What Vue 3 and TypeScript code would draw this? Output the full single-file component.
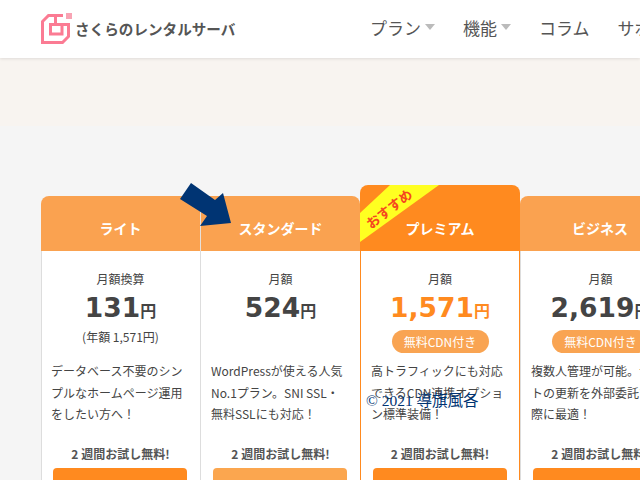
<template>
  <div class="page">
    <header class="site-header">
      <div class="logo">
        <svg class="logo-mark" viewBox="0 0 31 32" width="31" height="32" aria-hidden="true">
          <path
            d="M22 2.500H7.500L1.500 8.500V29.500H21.500L27.500 23.500V11.500H9.500V21H21V11.500M14.500 2.500V11.500"
            fill="none"
            stroke="#fb7b93"
            stroke-width="3"
          />
          <rect x="25" y="0" width="6" height="6" fill="#f8a4b4" />
        </svg>
        <span class="logo-text">さくらのレンタルサーバ</span>
      </div>
      <nav class="nav">
        <a v-for="item in navItems" :key="item.label" class="nav-item">
          {{ item.label }}<i v-if="item.caret" class="caret"></i>
        </a>
      </nav>
    </header>

    <div class="band"></div>

    <main class="plans">
      <section
        v-for="plan in plans"
        :key="plan.name"
        class="plan"
        :class="{ featured: plan.featured }"
      >
        <div class="plan-head">
          <div v-if="plan.featured" class="ribbon"><span>おすすめ</span></div>
          <h2>{{ plan.name }}</h2>
        </div>
        <div class="plan-body">
          <p class="price-label">{{ plan.label }}</p>
          <p class="price">{{ plan.price }}<small>円</small></p>
          <div class="extra">
            <p v-if="plan.yearly" class="yearly">{{ plan.yearly }}</p>
            <p v-if="plan.cdn" class="badge">無料CDN付き</p>
          </div>
          <p class="desc">{{ plan.desc }}</p>
          <p class="trial"><span class="two">2</span>週間お試し無料!</p>
          <a class="cta" :class="{ light: plan.light }"></a>
        </div>
      </section>
    </main>

    <svg class="arrow" width="60" height="50" viewBox="0 0 60 50" aria-hidden="true">
      <polygon points="11,3 35,20 43,13 51,43 20,46 27,36 0,19" fill="#003473" />
    </svg>
    <div class="watermark">© 2021 導旗風各</div>
  </div>
</template>

<script setup lang="ts">
interface Plan {
  name: string
  label: string
  price: string
  yearly?: string
  cdn?: boolean
  featured?: boolean
  light?: boolean
  desc: string
}

const navItems = [
  { label: 'プラン', caret: true },
  { label: '機能', caret: true },
  { label: 'コラム', caret: false },
  { label: 'サポート', caret: false }
]

const plans: Plan[] = [
  {
    name: 'ライト',
    label: '月額換算',
    price: '131',
    yearly: '(年額 1,571円)',
    desc: 'データベース不要のシンプルなホームページ運用をしたい方へ！'
  },
  {
    name: 'スタンダード',
    label: '月額',
    price: '524',
    light: true,
    desc: 'WordPressが使える人気No.1プラン。SNI SSL・無料SSLにも対応！'
  },
  {
    name: 'プレミアム',
    label: '月額',
    price: '1,571',
    cdn: true,
    featured: true,
    desc: '高トラフィックにも対応できるCDN連携オプション標準装備！'
  },
  {
    name: 'ビジネス',
    label: '月額',
    price: '2,619',
    cdn: true,
    desc: '複数人管理が可能。サイトの更新を外部委託する際に最適！'
  }
]
</script>

<style>
html,
body {
  margin: 0;
  overflow: hidden;
  background: #f5f5f5;
}
</style>

<style scoped>
.page {
  position: relative;
  width: 640px;
  height: 480px;
  overflow: hidden;
  background: #f5f5f5;
  color: #444;
  font-family: "Noto Sans CJK JP", "Noto Sans", sans-serif;
}

.site-header {
  position: relative;
  z-index: 1;
  display: flex;
  align-items: center;
  justify-content: space-between;
  box-sizing: border-box;
  height: 58px;
  padding: 0 0 4px 41px;
  background: #fff;
  box-shadow: 0 1px 3px rgba(0, 0, 0, 0.1);
}

.logo {
  display: flex;
  align-items: center;
  gap: 3px;
}

.logo-mark {
  margin-top: 4px;
}

.logo-text {
  margin-top: 2px;
  color: #555;
  font-size: 14.6px;
  font-weight: 700;
  white-space: nowrap;
}

.nav {
  display: flex;
  flex: none;
  gap: 28px;
  width: 270px;
  font-size: 17px;
  color: #555;
  white-space: nowrap;
}

.nav-item {
  display: flex;
  align-items: center;
}

.caret {
  width: 0;
  height: 0;
  margin-left: 4px;
  border: 5px solid transparent;
  border-top: 6px solid #bbb;
  border-bottom: 0;
}

.band {
  height: 68px;
  background: #f8f4f0;
}

.plans {
  display: flex;
  align-items: flex-end;
  width: 800px;
  padding: 59px 0 0 41px;
}

.plan {
  flex: none;
  width: 160px;
}

.plan:first-child {
  width: 159px;
}

.plan-head {
  position: relative;
  display: flex;
  align-items: flex-end;
  justify-content: center;
  box-sizing: border-box;
  height: 55px;
  padding-bottom: 13px;
  overflow: hidden;
  border-radius: 8px 8px 0 0;
  background: #faa250;
}

.plan:nth-child(2) .plan-head {
  border-left: 1px solid #e6e0da;
  border-top-left-radius: 0;
}

.featured .plan-head {
  height: 66px;
  background: #ff8a1f;
}

.plan-head h2 {
  margin: 0;
  color: #fff;
  font-size: 14px;
  font-weight: 700;
}

.ribbon {
  position: absolute;
  top: 0;
  left: 0;
  width: 80px;
  height: 58px;
  background: #ffff21;
  clip-path: polygon(0 57px, 0 28px, 30px 0, 79px 0);
}

.ribbon span {
  position: absolute;
  top: 13px;
  left: 2px;
  color: #f5471f;
  font-size: 13.500px;
  font-weight: 700;
  line-height: 21px;
  transform: rotate(-38deg);
  white-space: nowrap;
}

.plan-body {
  box-sizing: border-box;
  height: 229px;
  padding: 19px 10px 0;
  border-left: 1px solid #ddd;
  background: #fff;
  text-align: center;
}

.plan:first-child .plan-body {
  padding-left: 9px;
}

.featured .plan-body {
  border-right: 1px solid #ff8a1f;
  border-left: 1px solid #ff8a1f;
}

.plan-body p {
  margin: 0;
}

.price-label {
  font-size: 12px;
  line-height: 18px;
}

.plan-body .price {
  margin: 3px 0 3px;
  font-family: "DejaVu Sans", sans-serif;
  font-size: 26.500px;
  font-weight: 700;
  line-height: 34px;
}

.price small {
  font-family: "Noto Sans CJK JP", sans-serif;
  font-size: 16px;
}

.featured .price {
  color: #ff8a1f;
}

.extra {
  height: 23px;
}

.yearly {
  font-size: 12px;
  line-height: 14px;
}

.badge {
  width: 97px;
  margin: 0 auto !important;
  border-radius: 12px;
  background: #f9a452;
  color: #fff;
  font-size: 12px;
  line-height: 23px;
}

.plan-body .desc {
  height: 65px;
  margin-top: 7px;
  font-size: 12px;
  line-height: 21.600px;
  text-align: left;
}

.plan-body .trial {
  margin-top: 20px;
  color: #555;
  font-size: 12px;
  font-weight: 700;
  line-height: 18px;
}

.two {
  margin-right: 3px;
}

.cta {
  display: block;
  width: 134px;
  height: 40px;
  margin: 5px 0 0 2px;
  border-radius: 4px;
  background: #ff8a1f;
}

.cta.light {
  background: #fba64f;
}

.arrow {
  position: absolute;
  top: 180px;
  left: 180px;
}

.watermark {
  position: absolute;
  top: 388px;
  left: 366px;
  color: #003473;
  font-family: "Liberation Serif", "Noto Sans CJK JP", serif;
  font-size: 15.500px;
  white-space: nowrap;
}
</style>
